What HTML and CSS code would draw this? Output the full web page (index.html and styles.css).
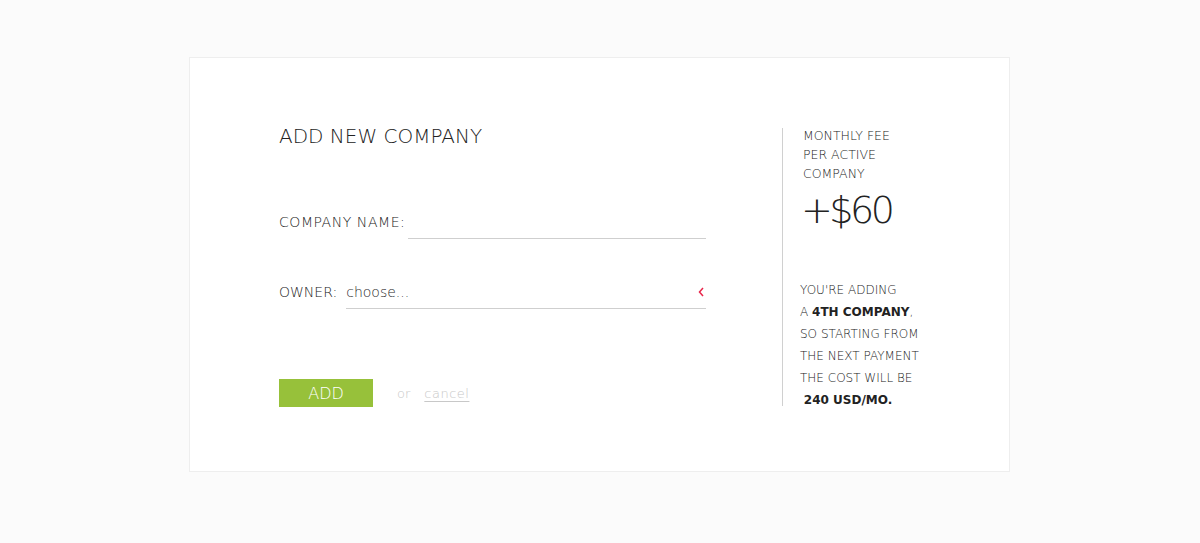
FILE: index.html
```html
<!DOCTYPE html>
<html>
<head>
<meta charset="utf-8">
<link rel="stylesheet" href="styles.css">
</head>
<body>
<div class="card">
  <div class="main">
    <h1 class="title">ADD NEW COMPANY</h1>
    <div class="field field-name">
      <span class="label">COMPANY NAME:</span>
      <span class="input"></span>
    </div>
    <div class="field field-owner">
      <span class="label">OWNER:</span>
      <span class="input select"><span class="placeholder">choose...</span>
        <svg class="chev" width="6" height="10" viewBox="0 0 6 10"><path d="M5 1 L1.5 5 L5 9" fill="none" stroke="#e8254a" stroke-width="1.5"/></svg>
      </span>
    </div>
    <div class="actions">
      <button class="btn">ADD</button>
      <span class="or">or</span>
      <a class="cancel">cancel</a>
    </div>
  </div>
  <div class="side">
    <div class="fee-label">MONTHLY FEE<br>PER ACTIVE<br>COMPANY</div>
    <div class="fee">+$60</div>
    <div class="note">YOU'RE ADDING<br>A <b>4TH COMPANY</b>,<br>SO STARTING FROM<br>THE NEXT PAYMENT<br>THE COST WILL BE<br>&nbsp;<b>240 USD/MO.</b></div>
  </div>
</div>
</body>
</html>
```
FILE: styles.css
```css
html, body { margin: 0; padding: 0; }
body {
  background: #fbfbfb;
  font-family: "DejaVu Sans", "Liberation Sans", sans-serif;
  color: #222;
  height: 543px;
  overflow: hidden;
}
.card {
  box-sizing: border-box;
  margin: 57px 0 0 189px;
  width: 821px;
  height: 415px;
  background: #fff;
  border: 1px solid #eeeeee;
  display: grid;
  grid-template-columns: 427px 1fr;
  column-gap: 76px;
  padding: 70px 0 0 89px;
}
.main { display: flex; flex-direction: column; }
.title {
  margin: 0;
  font-weight: 200;
  font-size: 20px;
  line-height: 16px;
  letter-spacing: 0px;
  color: #222;
}
.field {
  display: flex;
  align-items: flex-end;
  font-weight: 200;
  font-size: 14px;
  color: #222;
}
.field-name { margin-top: 68px; }
.field-owner { margin-top: 41px; }
.label { line-height: 18px; padding-bottom: 8px; margin-right: 3px; letter-spacing: 0.55px; }
.field-owner .label { margin-right: 9px; letter-spacing: 0; }
.input {
  flex: 1;
  height: 26px;
  border-bottom: 1px solid #cfcfcf;
}
.select {
  display: flex;
  align-items: center;
  justify-content: space-between;
  height: 24px;
  padding-bottom: 4px;
}
.placeholder { font-size: 14px; color: #2a2a2a; font-weight: 300; margin-left: 0; }
.chev { margin-right: 2px; }
.actions {
  margin-top: 70px;
  display: flex;
  align-items: center;
}
.btn {
  width: 94px;
  height: 28px;
  border: 0;
  background: #97c13a;
  color: #fff;
  font-family: inherit;
  font-weight: 300;
  font-size: 16px;
  padding: 0;
}
.or { margin-left: 24px; color: #c8c8c8; font-size: 13px; font-weight: 300; }
.cancel {
  margin-left: 14px;
  color: #c8c8c8;
  font-size: 13px;
  font-weight: 300;
  letter-spacing: 0.5px;
  text-decoration: underline;
  text-underline-offset: 3px;
}
.side {
  border-left: 1px solid #d0d0d0;
  height: 278px;
  padding-left: 20px;
  margin-top: 0;
}
.fee-label {
  font-size: 12.5px;
  font-weight: 200;
  line-height: 19px;
  margin-top: -2px;
  color: #222;
}
.fee {
  font-size: 38px;
  font-weight: 200;
  line-height: 44px;
  margin-top: 5px;
  margin-left: -2px;
  letter-spacing: -3.5px;
  color: #222;
}
.note {
  margin-top: 47px;
  margin-left: -3px;
  font-size: 12px;
  font-weight: 200;
  line-height: 22px;
  color: #222;
}
.note b { font-weight: 700; }
```
